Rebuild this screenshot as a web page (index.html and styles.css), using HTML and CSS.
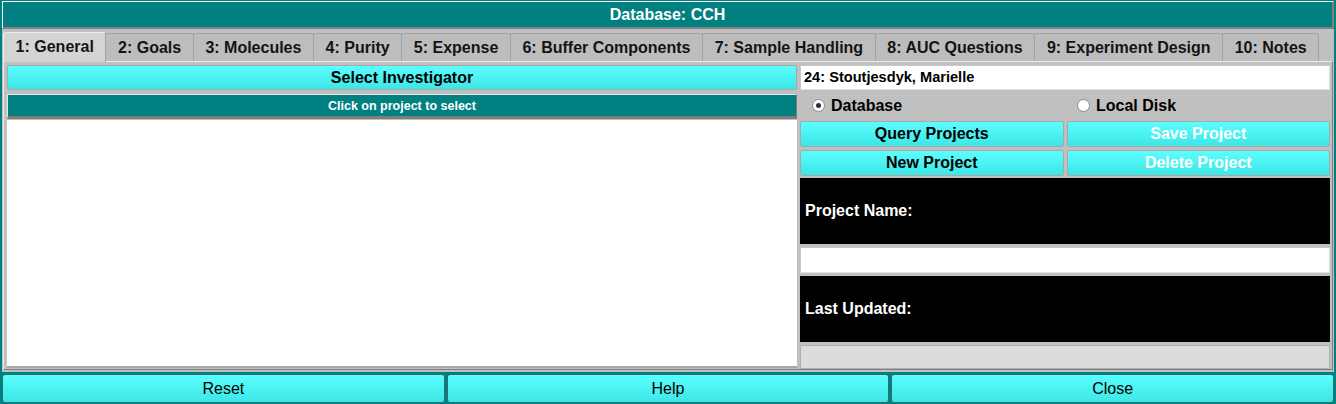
FILE: index.html
```html
<!DOCTYPE html>
<html>
<head>
<meta charset="utf-8">
<link rel="stylesheet" href="styles.css">
</head>
<body>
<div class="app">
  <div class="title">Database: CCH</div>
  <div class="main">
    <div class="tabs">
      <div class="tab active">1: General</div>
      <div class="tab">2: Goals</div>
      <div class="tab">3: Molecules</div>
      <div class="tab">4: Purity</div>
      <div class="tab">5: Expense</div>
      <div class="tab">6: Buffer Components</div>
      <div class="tab">7: Sample Handling</div>
      <div class="tab">8: AUC Questions</div>
      <div class="tab">9: Experiment Design</div>
      <div class="tab">10: Notes</div>
    </div>
    <div class="panel">
      <div class="left">
        <div class="btn big">Select Investigator</div>
        <div class="banner">Click on project to select</div>
        <div class="list"></div>
      </div>
      <div class="right">
        <div class="field name">24: Stoutjesdyk, Marielle</div>
        <div class="radios">
          <div class="radio"><span class="dot on"></span>Database</div>
          <div class="radio"><span class="dot"></span>Local Disk</div>
        </div>
        <div class="btngrid">
          <div class="btn big">Query Projects</div>
          <div class="btn big disabled">Save Project</div>
          <div class="btn big">New Project</div>
          <div class="btn big disabled">Delete Project</div>
        </div>
        <div class="blackbox first">Project Name:</div>
        <div class="field input"></div>
        <div class="blackbox">Last Updated:</div>
        <div class="field gray"></div>
      </div>
    </div>
  </div>
  <div class="bottom">
    <div class="btn foot">Reset</div>
    <div class="btn foot">Help</div>
    <div class="btn foot">Close</div>
  </div>
</div>
</body>
</html>
```
FILE: styles.css
```css
* { box-sizing: border-box; }
html, body { margin: 0; padding: 0; }
body {
  font-family: "Liberation Sans", Arial, sans-serif;
  background: #008080;
}
.app {
  width: 1336px;
  height: 404px;
  background: #008080;
  display: flex;
  flex-direction: column;
  padding: 1px 2px 1px 2px;
}
.title {
  height: 28px;
  flex: none;
  border-top: 1px solid #ffffff;
  border-left: 1px solid #ffffff;
  border-bottom: 2px solid #808080;
  border-right: 2px solid #808080;
  color: #ffffff;
  font-weight: bold;
  font-size: 16px;
  display: flex;
  align-items: center;
  justify-content: center;
}
.main {
  flex: none;
  height: 343px;
  background: #c0c0c0;
  padding: 1px 1px 2px 1px;
  display: flex;
  flex-direction: column;
}
.tabs {
  display: flex;
  height: 31px;
  align-items: flex-end;
  flex: none;
}
.tab {
  height: 28px;
  padding: 1px 11.6px 0 11.6px;
  border: 1px solid #a2a2a2;
  border-bottom: none;
  border-radius: 3px 3px 0 0;
  background: #bdbdbd;
  color: #141414;
  font-weight: bold;
  font-size: 16px;
  display: flex;
  align-items: center;
  margin-right: -1px;
}
.tab.active {
  height: 30px;
  background: #d4d4d4;
  border-color: #ececec #a2a2a2 #a2a2a2 #ececec;
  padding-top: 0;
  padding-bottom: 1px;
  position: relative;
  z-index: 1;
  margin-bottom: -1px;
}
.panel {
  flex: 1;
  border: 1px solid;
  border-color: #ececec #808080 #808080 #ececec;
  padding: 3px 2px 0 3px;
  display: grid;
  grid-template-columns: 790px 1fr;
  column-gap: 3px;
}
.left, .right {
  display: flex;
  flex-direction: column;
}
.btn {
  display: flex;
  align-items: center;
  justify-content: center;
  background: linear-gradient(#5cfefe, #3de6e6);
  color: #000;
  border: 1px solid #a8a8a8;
  border-radius: 2px;
}
.btn.big {
  font-weight: bold;
  font-size: 16px;
  height: 25px;
}
.btn.disabled { color: #ffffff; }
.banner {
  margin-top: 4px;
  height: 25px;
  background: #008080;
  color: #fff;
  font-weight: bold;
  font-size: 12.5px;
  display: flex;
  align-items: center;
  justify-content: center;
  border-top: 1px solid #e8e8e8;
  border-left: 1px solid #e8e8e8;
  border-bottom: 3px solid #7e7e7e;
  border-right: 1px solid #7e7e7e;
}
.list {
  margin-top: 1px;
  flex: 1;
  background: #ffffff;
  border-bottom: 2px solid #a8a8a8;
  margin-bottom: 1px;
}
.field {
  background: #ffffff;
  border: 1px solid;
  border-color: #c8c8c8 #e0e0e0 #e0e0e0 #c8c8c8;
}
.name {
  height: 25px;
  font-weight: bold;
  font-size: 14.6px;
  display: flex;
  align-items: center;
  padding-left: 3px;
  padding-bottom: 1px;
}
.radios {
  height: 31px;
  display: grid;
  grid-template-columns: 264px 1fr;
  align-items: center;
  padding-left: 12px;
}
.radio {
  display: flex;
  align-items: center;
  font-weight: bold;
  font-size: 16px;
  color: #000;
}
.radio + .radio { padding-left: 1px; }
.dot {
  width: 13px;
  height: 13px;
  border-radius: 50%;
  background: #ffffff;
  border: 1px solid #8c8c8c;
  margin-right: 6px;
  display: flex;
  align-items: center;
  justify-content: center;
}
.dot.on::after {
  content: "";
  width: 5px;
  height: 5px;
  border-radius: 50%;
  background: #303030;
}
.btngrid {
  display: grid;
  grid-template-columns: 1fr 1fr;
  gap: 3px;
}
.btngrid .btn.big { height: 26px; }
.blackbox {
  height: 66px;
  background: #000;
  color: #fff;
  font-weight: bold;
  font-size: 16px;
  display: flex;
  align-items: center;
  padding-left: 5px;
}
.blackbox.first { margin-top: 2px; }
.input {
  margin-top: 3px;
  margin-bottom: 3px;
  height: 26px;
}
.gray {
  margin-top: 3px;
  height: 24px;
  background: #dcdcdc;
  border-color: #b0b0b0;
}
.bottom {
  flex: 1;
  display: grid;
  grid-template-columns: 1fr 1fr 1fr;
  gap: 2px;
  padding-top: 2px;
  padding-bottom: 0;
}
.btn.foot {
  font-size: 16px;
  border: 1px solid #2a7070;
  border-radius: 3px;
}
```
